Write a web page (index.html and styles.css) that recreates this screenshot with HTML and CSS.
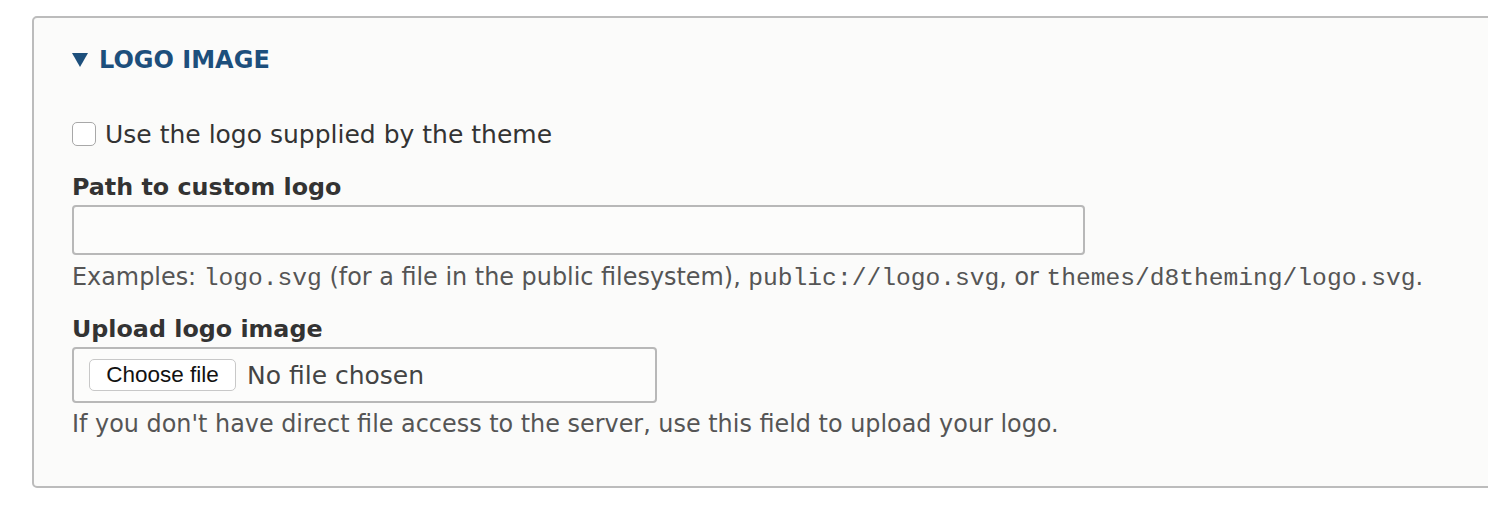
FILE: index.html
```html
<!DOCTYPE html>
<html>
<head>
<meta charset="utf-8">
<link rel="stylesheet" href="styles.css">
</head>
<body>
<div class="fieldset">
  <div class="summary"><span class="arrow"></span>LOGO IMAGE</div>
  <div class="content">
    <label class="check-row"><span class="checkbox"></span><span>Use the logo supplied by the theme</span></label>
    <div class="field">
      <div class="label">Path to custom logo</div>
      <div class="text-input"></div>
      <div class="desc">Examples: <code>logo.svg</code> (for a file in the public filesystem), <code>public://logo.svg</code>, or <code>themes/d8theming/logo.svg</code>.</div>
    </div>
    <div class="field">
      <div class="label">Upload logo image</div>
      <div class="file-input"><span class="choose">Choose file</span><span class="nofile">No file chosen</span></div>
      <div class="desc">If you don't have direct file access to the server, use this field to upload your logo.</div>
    </div>
  </div>
</div>
</body>
</html>
```
FILE: styles.css
```css
html, body {
  margin: 0;
  padding: 0;
  background: #fff;
  overflow: hidden;
}
body {
  font-family: "DejaVu Sans", "Noto Sans", sans-serif;
  color: #333;
}
.fieldset {
  margin: 16px -40px 0 32px;
  border: 2px solid #bcbcbc;
  border-radius: 5px;
  background: #fbfbfa;
  padding: 0 0 44px 38px;
}
.summary {
  display: flex;
  align-items: center;
  height: 84px;
  color: #1d4f7c;
  font-weight: bold;
  font-size: 24px;
}
.arrow {
  width: 0;
  height: 0;
  border-left: 8px solid transparent;
  border-right: 8px solid transparent;
  border-top: 14px solid #1d4f7c;
  margin-right: 11px;
}
.content {
  padding-top: 17px;
}
.check-row {
  display: flex;
  align-items: center;
  font-size: 25px;
  height: 30px;
  margin-bottom: 22px;
}
.checkbox {
  width: 22px;
  height: 22px;
  border: 1px solid #a8a8a8;
  border-radius: 5px;
  background: #fff;
  margin-right: 9px;
}
.label {
  font-weight: bold;
  font-size: 23.8px;
  height: 32px;
  line-height: 32px;
  margin-bottom: 2px;
}
.text-input {
  width: 1009px;
  height: 46px;
  border: 2px solid #b8b8b8;
  border-radius: 4px;
  background: #fcfcfb;
}
.desc {
  font-size: 23.9px;
  color: #555;
  line-height: 36px;
  margin-top: 4px;
}
.desc code {
  font-family: "Liberation Mono", "Courier New", monospace;
  font-size: 24.6px;
}
.field + .field {
  margin-top: 16px;
}
.file-input {
  display: flex;
  align-items: center;
  width: 566px;
  height: 52px;
  border: 2px solid #b8b8b8;
  border-radius: 4px;
  background: #fcfcfb;
  padding-left: 15px;
}
.field + .field .desc {
  margin-top: 3px;
}
.choose {
  box-sizing: border-box;
  width: 147px;
  text-align: center;
  font-family: "Liberation Sans", Arial, sans-serif;
  font-size: 22.5px;
  color: #111;
  background: #fff;
  border: 1px solid #c8c8c8;
  border-radius: 5px;
  height: 32px;
  line-height: 30px;
  margin-right: 11px;
}
.nofile {
  font-size: 25px;
  color: #444;
}
```
